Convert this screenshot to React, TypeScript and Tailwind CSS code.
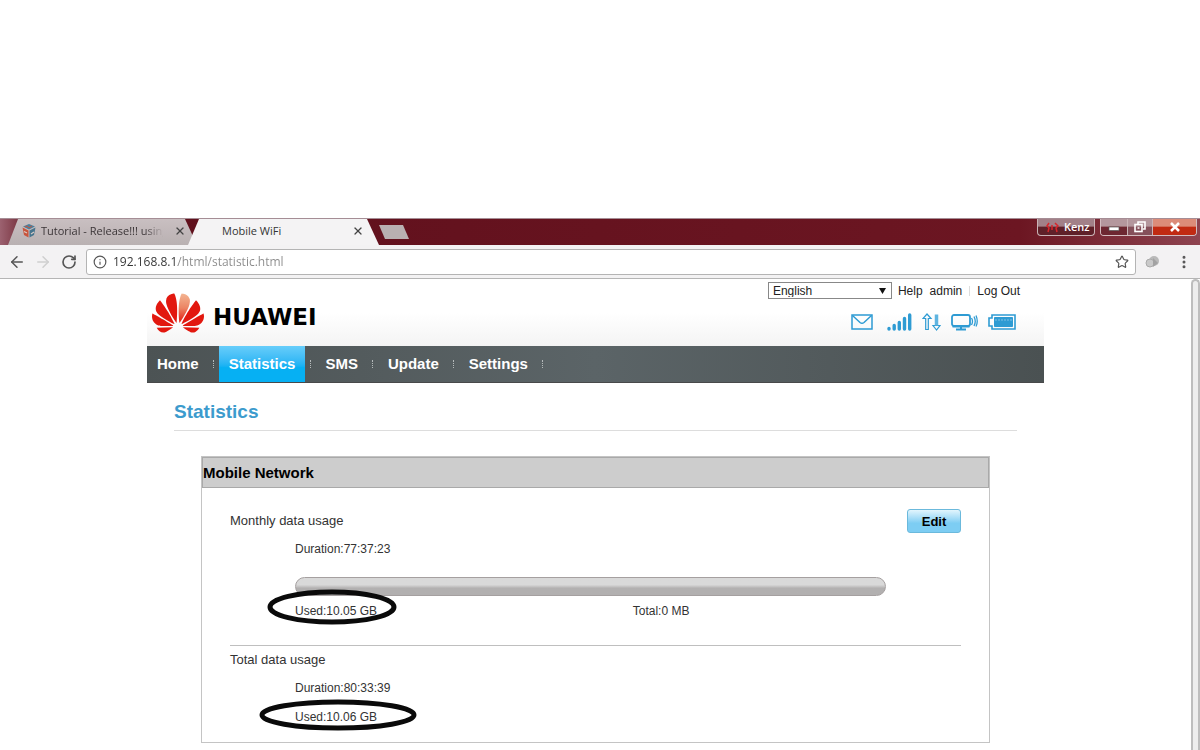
import React, { useState } from 'react';
import { ArrowLeft, ArrowRight, Info, MoreVertical, RotateCw, Star, X } from 'lucide-react';

const navItems = ['Home', 'Statistics', 'SMS', 'Update', 'Settings'];

const CubeIcon = () => (
  <svg width="14" height="14" viewBox="0 0 14 14" className="shrink-0">
    <path d="M7 0 13 2.500 7 5.500 1 2.500Z" fill="#4b7f9c" />
    <path d="M0.500 3.500 6.500 6.500V13.500L2 11Z" fill="#c8553c" />
    <path d="M13.500 3.500 7.500 6.500V13.500L12 11Z" fill="#47748d" />
    <path d="M3 3 5 2l2 2 3-2" stroke="#c8553c" fill="none" />
    <path d="M2 7.500 5 9M9 10l3-2" stroke="#d9cbc4" strokeWidth="1.200" />
  </svg>
);

const HuaweiFlower = () => (
  <svg width="52" height="40" viewBox="0 2.900 24 18.200" fill="#e2180f" aria-hidden="true">
    <defs>
      <linearGradient id="petal" x1="0" y1="0" x2="0" y2="1">
        <stop offset="0" stopColor="#f3b592" />
        <stop offset="0.500" stopColor="#ec8463" />
        <stop offset="1" stopColor="#e2180f" />
      </linearGradient>
    </defs>
    <path d="M3.67 6.14S1.82 7.91 1.72 9.78v.35c.08 1.51 1.22 2.4 1.22 2.4 1.83 1.79 6.26 4.04 7.3 4.55 0 0 .06.03.1-.01l.02-.04v-.04C7.52 10.8 3.67 6.14 3.67 6.14z" />
    <path d="M9.65 18.6c-.02-.08-.1-.08-.1-.08l-7.38.26c.8 1.43 2.15 2.53 3.56 2.2.96-.25 3.16-1.78 3.88-2.3.06-.05.04-.09.04-.09z" />
    <path d="M9.73 17.82C6.49 15.63.21 12.28.21 12.28c-.15.46-.2.9-.21 1.3v.07c0 1.07.4 1.82.4 1.82.8 1.69 2.34 2.2 2.34 2.2.7.3 1.4.31 1.4.31.12.02 4.4 0 5.54 0 .05 0 .08-.05.08-.05z" />
    <path d="M9.06 3.19a3.42 3.42 0 0 0-2.57 3.15v.41c.03.6.16 1.05.16 1.05.66 2.9 3.86 7.65 4.55 8.65.05.05.1.03.1.03a.1.1 0 0 0 .06-.1c1.06-10.6-1.11-13.42-1.11-13.42-.32.02-1.19.23-1.19.23z" />
    <path fill="url(#petal)" d="M17.359 5.46s-.49-1.8-2.44-2.28c0 0-.57-.14-1.17-.22 0 0-2.18 2.81-1.12 13.43.01.07.06.08.06.08.07.03.1-.03.1-.03.72-1.03 3.9-5.76 4.55-8.64 0 0 .36-1.4.02-2.34z" />
    <path d="M14.439 18.53s-.07 0-.09.05c0 0-.01.07.03.1.7.51 2.85 2 3.88 2.3 0 0 .16.05.43.06h.14c.69-.02 1.9-.37 3-2.26z" />
    <path d="M22.269 10.12c.14-2.06-1.94-3.97-1.94-3.98 0 0-3.85 4.66-6.67 10.8 0 0-.03.08.02.13l.04.01h.06c1.06-.53 5.46-2.77 7.28-4.54 0 0 1.15-.93 1.21-2.42z" />
    <path d="M23.789 12.26s-6.28 3.37-9.52 5.55c0 0-.05.04-.03.11 0 0 .03.06.07.06 1.16 0 5.56 0 5.67-.02 0 0 .57-.02 1.27-.29 0 0 1.56-.5 2.37-2.27 0 0 .73-1.45.17-3.14z" />
  </svg>
);

const MailIcon = () => (
  <svg width="22" height="16" viewBox="0 0 22 16" fill="none" stroke="#2e9bd3" strokeWidth="1.500">
    <path d="M1 1h20v14H1z" />
    <path d="M1.500 1.500 9 8.500q2 1.500 4 0l7.500-7" />
  </svg>
);

const SignalIcon = () => (
  <svg width="25" height="18" viewBox="0 0 25 18" stroke="#2e9bd3" strokeWidth="3.400" strokeLinecap="round">
    <path d="M2 15.500v.5M7.200 12.500V16M12.300 9.500V16M17.500 5.500V16M22.700 2V16" />
  </svg>
);

const TrafficIcon = () => (
  <svg width="19" height="18" viewBox="0 0 19 18" fill="none" stroke="#2e9bd3" strokeWidth="1.200">
    <path d="M5 1 9 5.500H6.300V16.500H3.700V5.500H1Z" />
    <path d="M14.500 17 11 12.500H18Z" />
    <path d="M14.500 1.500v11" stroke="#5fb4e0" strokeWidth="3.500" />
  </svg>
);

const MonitorIcon = () => (
  <svg width="27" height="18" viewBox="0 0 27 18" fill="none" stroke="#2e9bd3">
    <rect x="1" y="2" width="18" height="11" rx="2" strokeWidth="1.800" />
    <path d="M1.500 13.500h17M5 16.500h10M10 13v3" strokeWidth="2" />
    <path d="M20.500 5q2 3 0 7M23 3.500q2.500 5 0 9.500M25 2.500q2.500 6 0 11" strokeWidth="1.300" />
  </svg>
);

const BatteryIcon = () => (
  <svg width="28" height="16" viewBox="0 0 28 16" fill="none" stroke="#2e9bd3">
    <path d="M4 1h23v14H4v-3H1V4h3z" strokeWidth="1.600" />
    <path d="M6.500 3.500h18v9h-18z" fill="#2e9bd3" stroke="#2e9bd3" />
    <path d="M7 6h17" stroke="#7cc0e6" strokeDasharray="2 1" />
  </svg>
);

const TitleBar = () => (
  <div className="flex h-[27px] items-start border-t border-[#a58d95] bg-[linear-gradient(to_right,#9c6270,#5e0f1b_3%,#6c1622_85%,#8e4450)] pl-2 pr-[3px]">
    <div className="flex h-[26px] w-[190px] items-center gap-[4px] bg-linear-to-b from-[#c9bfc1] to-[#b9b1b2] pb-[2px] pl-[14px] text-[11px] text-[#3b3537] [clip-path:polygon(10px_0,177px_0,189px_100%,0_100%)]">
      <CubeIcon />
      <span className="w-[130px] whitespace-nowrap pl-px [mask-image:linear-gradient(to_right,black_80%,transparent_95%)]">
        Tutorial - Release!!! using
      </span>
      <button type="button" aria-label="Close tab" className="shrink-0">
        <X size={12} strokeWidth={2.5} color="#444" />
      </button>
    </div>
    <div className="z-10 -ml-[10px] flex h-[26px] w-[191px] items-center justify-between bg-[#f4f3f4] pb-[2px] pl-[34px] pr-[15px] text-[11px] text-[#333] [clip-path:polygon(11px_0,179px_0,191px_100%,0_100%)]">
      <span>Mobile WiFi</span>
      <button type="button" aria-label="Close tab">
        <X size={12} strokeWidth={2.5} color="#444" />
      </button>
    </div>
    <button
      type="button"
      aria-label="New tab"
      className="mt-[6px] h-[14px] w-[30px] bg-[#b9b0b1] [clip-path:polygon(0_0,80%_0,100%_100%,20%_100%)]"
    />
    <div className="ml-auto flex gap-[5px]">
      <button
        type="button"
        className="flex h-[17px] w-[58px] items-center gap-[5px] rounded-b-[4px] border border-t-0 border-[#c9b3b6] bg-linear-to-b from-[#a28088] from-45% to-[#5f2029] to-50% pl-2 text-[11px] font-semibold leading-4 text-white"
      >
        <svg width="13" height="11" viewBox="0 0 13 11" fill="none" stroke="#d8252a" strokeWidth="1.500">
          <path d="M3 1 1 4l2 2-1 4M6 3v5M9 1l3 3-2 2 1 4" />
        </svg>
        Kenz
      </button>
      <div className="flex h-[17px] overflow-hidden rounded-b-[4px] border border-t-0 border-[#d3bcbf]">
        <button type="button" aria-label="Minimize" className="flex w-[27px] items-center justify-center border-r border-[#c9b3b6] bg-linear-to-b from-[#b4979d] from-45% to-[#6d2731] to-50%">
          <svg width="12" height="12" viewBox="0 0 12 12">
            <rect x="1" y="6" width="10" height="3.500" fill="#fff" stroke="#555" strokeWidth="0.700" />
          </svg>
        </button>
        <button type="button" aria-label="Restore" className="flex w-[25px] items-center justify-center border-r border-[#c9b3b6] bg-linear-to-b from-[#b4979d] from-45% to-[#85505a] to-50%">
          <svg width="12" height="12" viewBox="0 0 12 12" fill="none" stroke="#fff" strokeWidth="1.600">
            <path d="M4 3V1h7v7H9" />
            <rect x="1" y="3.500" width="7" height="7" />
            <path d="M3.500 7h2" />
          </svg>
        </button>
        <button type="button" aria-label="Close" className="flex w-[43px] items-center justify-center bg-linear-to-b from-[#dc8c79] from-45% to-[#c12a12] to-50%">
          <svg width="12" height="10" viewBox="0 0 12 10" stroke="#fff" strokeWidth="2.500">
            <path d="M2 1l8 8M10 1 2 9" />
          </svg>
        </button>
      </div>
    </div>
  </div>
);

const Toolbar = () => (
  <div className="flex h-[34px] items-center border-b border-[#b5b5b5] bg-[#f3f2f3] pl-2 pr-[8px] text-[#555]">
    <button type="button" aria-label="Back">
      <ArrowLeft size={18} />
    </button>
    <button type="button" aria-label="Forward" className="ml-[8px] text-[#cfcfcf]">
      <ArrowRight size={18} />
    </button>
    <button type="button" aria-label="Reload" className="ml-[9px]">
      <RotateCw size={16} strokeWidth={2.5} />
    </button>
    <div className="ml-[9px] flex h-[26px] flex-1 items-center rounded-[3px] border border-[#b4b4b4] bg-white px-[6px]">
      <Info size={14} className="shrink-0" />
      {/* host part is darker than the path */}
      <input
        type="text"
        aria-label="Address"
        defaultValue="192.168.8.1/html/statistic.html"
        className="ml-[6px] flex-1 bg-linear-to-r from-[#333] from-[64px] to-[#8a8a8a] to-[65px] bg-clip-text text-[12px] text-transparent caret-black outline-none"
      />
      <button type="button" aria-label="Bookmark">
        <Star size={14} />
      </button>
    </div>
    <svg width="16" height="14" viewBox="0 0 16 14" className="ml-[9px]">
      <circle cx="9" cy="6" r="5" fill="#b9b9b9" />
      <circle cx="5" cy="8" r="4" fill="#c9c9c9" stroke="#aaa" />
      <path d="M8 3v9l5-4z" fill="#a2a2a2" />
    </svg>
    <button type="button" aria-label="Menu" className="ml-[15px]">
      <MoreVertical size={16} strokeWidth={2.5} />
    </button>
  </div>
);

const App: React.FC = () => {
  const [language, setLanguage] = useState('English');
  const [active, setActive] = useState('Statistics');

  return (
    <div className="flex min-h-screen flex-col bg-white pt-[218px] font-['Liberation_Sans',Arial,sans-serif] text-[#333]">
      {/* Browser window */}
      <div className="font-['Open_Sans',sans-serif]">
        <TitleBar />
        <Toolbar />
      </div>

      <div className="flex flex-1">
        <main className="flex-1 pb-2">
          <div className="mx-auto w-full max-w-[897px]">
            {/* Header */}
            <header className="flex h-[67px] justify-between bg-linear-to-b from-white from-50% to-[#f4f4f4] pl-[5px] pr-[24px]">
              <div className="flex items-center gap-[9px]">
                <HuaweiFlower />
                <span className="mt-[10px] font-['DejaVu_Sans',sans-serif] text-[23px] font-bold leading-none text-black">HUAWEI</span>
              </div>
              <div className="pt-[3px]">
                <div className="flex h-[17px] items-center justify-end text-[12px] text-[#222]">
                  <div className="relative">
                    <select
                      aria-label="Language"
                      value={language}
                      onChange={(e) => setLanguage(e.target.value)}
                      className="block h-[17px] w-[124px] appearance-none border border-[#888] bg-white pl-[4px] leading-none outline-none"
                    >
                      <option>English</option>
                    </select>
                    <svg width="7" height="6" viewBox="0 0 7 6" className="pointer-events-none absolute right-[6px] top-[6px]">
                      <path d="M0 0h7L3.500 6z" fill="#111" />
                    </svg>
                  </div>
                  <a href="#help" className="ml-[6px]">Help</a>
                  <a href="#admin" className="ml-[7px]">admin</a>
                  <span className="mx-[7px] h-[10px] w-px bg-[#ddd]" />
                  <a href="#logout">Log Out</a>
                </div>
                <div className="mt-[14px] flex items-center justify-end gap-[10px] pr-[4px]">
                  <MailIcon />
                  <span className="ml-[4px] flex"><SignalIcon /></span>
                  <TrafficIcon />
                  <MonitorIcon />
                  <BatteryIcon />
                </div>
              </div>
            </header>

            {/* Navigation */}
            <nav className="flex h-[37px] border-b border-[#48494a] bg-linear-to-r from-[#4c5354] via-[#5b6467] to-[#4a5152] text-[15px] font-bold text-white">
              {navItems.map((item) => (
                <React.Fragment key={item}>
                  <a
                    href={`#${item.toLowerCase()}`}
                    onClick={() => setActive(item)}
                    className={`flex items-center px-[10px] ${
                      active === item ? 'bg-linear-to-b from-[#66cdfa] to-[#06b0f3] to-60%' : ''
                    }`}
                  >
                    {item}
                  </a>
                  <span className="flex w-[10px] items-center justify-center">
                    <span className="h-[8px] border-l border-dotted border-[#b5babb]" />
                  </span>
                </React.Fragment>
              ))}
            </nav>

            <div className="px-[27px]">
              <h1 className="border-b border-[#ddd] pb-[5px] pt-[15px] text-[19px] font-bold leading-[27px] text-[#3c9bcd]">Statistics</h1>

              <section className="mx-[27px] mt-[25px] border border-[#c4c4c4]">
                <h2 className="h-[31px] border border-[#a9a9a9] bg-[#cdcdcd] text-[15px] font-bold leading-[29px] text-black">
                  Mobile Network
                </h2>

                <div className="px-[28px] text-[12px] leading-4">
                  <div className="flex items-start justify-between pt-[21px]">
                    <h3 className="text-[13px] leading-6">Monthly data usage</h3>
                    <button
                      type="button"
                      className="h-[24px] w-[54px] rounded-[3px] border border-[#6bb9dc] bg-linear-to-b from-[#e2f5fd] to-[#7dcdf3] to-60% text-[13px] font-bold leading-none text-black"
                    >
                      Edit
                    </button>
                  </div>
                  <div className="ml-[65px] mr-[75px]">
                    <p className="mt-2">Duration:77:37:23</p>
                    <div
                      role="progressbar"
                      aria-label="Monthly data usage"
                      aria-valuenow={0}
                      className="mt-[20px] h-[19px] rounded-full border border-[#a5a0a0] bg-linear-to-b from-[#d9d9d9] from-40% to-[#b2b0b0] to-60%"
                    />
                    <div className="mt-[7px] grid grid-cols-[4fr_3fr]">
                      <p className="relative">
                        Used:10.05 GB
                        <svg width="130" height="38" viewBox="0 0 130 38" className="absolute -left-7 -top-[15px]">
                          <ellipse cx="65" cy="19" rx="62" ry="15" fill="none" stroke="#0a0a0a" strokeWidth="5" />
                        </svg>
                      </p>
                      <p>Total:0 MB</p>
                    </div>
                  </div>

                  <hr className="mt-[26px] border-[#bfbfbf]" />

                  <h3 className="mt-[2px] text-[13px] leading-6">Total data usage</h3>
                  <div className="ml-[65px] pb-[17px]">
                    <p className="mt-2">Duration:80:33:39</p>
                    <p className="relative mt-[13px]">
                      Used:10.06 GB
                      <svg width="160" height="34" viewBox="0 0 160 34" className="absolute -left-[37px] -top-[11px]">
                        <ellipse cx="80" cy="17" rx="76" ry="13" fill="none" stroke="#0a0a0a" strokeWidth="5" />
                      </svg>
                    </p>
                  </div>
                </div>
              </section>
            </div>
          </div>
        </main>

        {/* Scroll bar */}
        <div className="w-[9px] rounded-t-full border-x-2 border-t-2 border-[#bdbdbd] bg-[#ededed]" />
      </div>
    </div>
  );
};

export default App;
